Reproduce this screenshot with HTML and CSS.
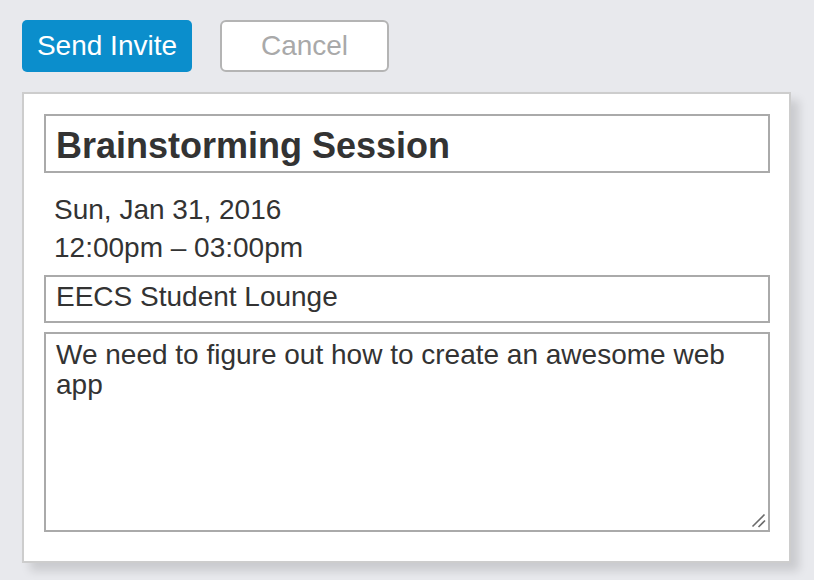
FILE: index.html
```
<!DOCTYPE html>
<html>
<head>
<meta charset="utf-8">
<link rel="stylesheet" href="styles.css">
</head>
<body>
<div class="actions">
  <button class="btn btn-primary">Send Invite</button>
  <button class="btn btn-cancel">Cancel</button>
</div>
<div class="card">
  <div class="field title">Brainstorming Session</div>
  <div class="when">
    <div class="when-line">Sun, Jan 31, 2016</div>
    <div class="when-line">12:00pm – 03:00pm</div>
  </div>
  <div class="field location">EECS Student Lounge</div>
  <div class="field notes">We need to figure out how to create an awesome web app
    <svg class="grip" width="16" height="16" viewBox="0 0 16 16">
      <line x1="1.5" y1="13.5" x2="13.5" y2="1.5" stroke="#6b6b6b" stroke-width="1.6"/>
      <line x1="7.5" y1="14" x2="14" y2="7.5" stroke="#6b6b6b" stroke-width="1.6"/>
    </svg>
  </div>
</div>
</body>
</html>
```
FILE: styles.css
```
html, body {
  margin: 0;
  padding: 0;
}
body {
  background: #e8e9ed;
  font-family: "Liberation Sans", Arial, Helvetica, sans-serif;
  color: #333;
  padding: 20px 22px;
}
.actions {
  display: flex;
  gap: 28px;
  margin-bottom: 20px;
}
.btn {
  font-family: inherit;
  font-size: 28px;
  height: 52px;
  padding: 0;
  box-sizing: border-box;
  display: flex;
  align-items: center;
  justify-content: center;
  cursor: pointer;
}
.btn-primary {
  width: 170px;
  background: #0b8ecc;
  color: #fff;
  border: none;
  border-radius: 5px;
}
.btn-cancel {
  width: 169px;
  background: #fff;
  color: #a9a9a9;
  border: 2px solid #b4b4b4;
  border-radius: 6px;
}
.card {
  width: 769px;
  box-sizing: border-box;
  background: #fff;
  border: 2px solid #cdcdcd;
  padding: 20px 19px 29px 20px;
  box-shadow: 8px 8px 9px rgba(0, 0, 0, 0.13);
}
.field {
  border: 2px solid #aaaaaa;
  padding: 0 10px;
}
.title {
  font-size: 36px;
  font-weight: bold;
  padding-top: 4px;
  line-height: 51px;
  margin-bottom: 18px;
}
.when {
  padding-left: 10px;
  font-size: 28px;
  line-height: 38px;
}
.location {
  margin-top: 8px;
  font-size: 28px;
  line-height: 40px;
  padding-bottom: 4px;
}
.notes {
  position: relative;
  margin-top: 9px;
  font-size: 28px;
  line-height: 30px;
  padding-top: 6px;
  height: 190px;
}
.grip {
  position: absolute;
  right: 1px;
  bottom: 1px;
}
```
